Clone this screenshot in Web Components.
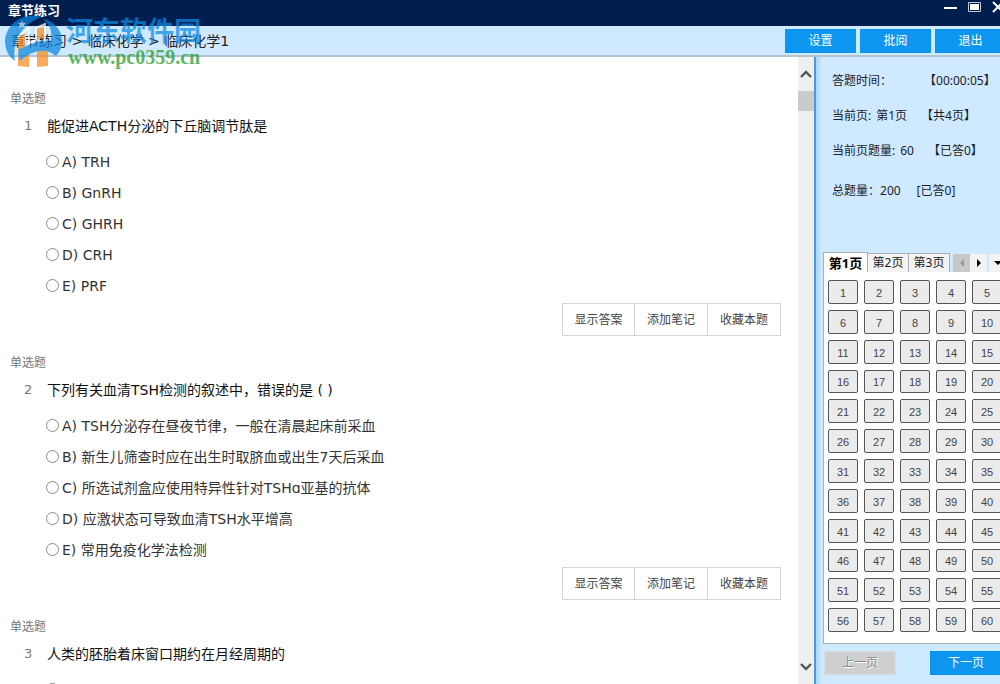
<!DOCTYPE html>
<html lang="zh-CN">
<head>
<meta charset="utf-8">
<title>章节练习</title>
<style>
html, body { margin: 0; height: 100%; overflow: hidden; }
body { font-family: "Noto Sans", "Noto Sans CJK SC", sans-serif; font-size: 12px; color: #222; background: #fff; }
</style>
</head>
<body>
<exam-app></exam-app>
<script>
function define(name, html, setup) {
  const template = document.createElement('template');
  template.innerHTML = html;
  customElements.define(name, class extends HTMLElement {
    connectedCallback() {
      if (this.shadowRoot) return;
      const root = this.attachShadow({ mode: 'open' });
      root.append(template.content.cloneNode(true));
      if (setup) setup(this, root);
    }
  });
}

define('title-bar', `
<style>
:host { display: flex; justify-content: space-between; height: 26px; background: #001f4f; color: #fff; }
h1 { margin: 0; padding: 1px 8px; font-size: 13px; line-height: 18px; font-weight: 700; }
nav { display: flex; gap: 10px; margin-right: -5px; }
button { padding: 0; border: 0; background: none; width: 14px; height: 15px; display: block; }
svg { display: block; }
</style>
<h1><slot></slot></h1>
<nav>
<button aria-label="最小化"><svg width="14" height="15"><path d="M1 8h13" stroke="#fff" stroke-width="2"/></svg></button>
<button aria-label="最大化"><svg width="14" height="15"><path d="M1.5 2.5h12v9h-12z" fill="none" stroke="#c9ccd6"/><path d="M3 4h9v6H3z" fill="#fff"/></svg></button>
<button aria-label="关闭"><svg width="14" height="15"><path d="M2 2l10 10M12 2L2 12" stroke="#fff" stroke-width="2"/></svg></button>
</nav>`);

define('blue-button', `
<style>
:host { display: block; }
button { width: 100%; height: 24px; padding: 0; border: 1px solid #0b93ea; background: #0c96ef; color: #fff; font: inherit; line-height: 20px; }
button:disabled { background: #cfcfcf; border-color: #dcdcdc; color: #8b8b8b; text-shadow: 1px 1px #fff; }
</style>
<button><slot></slot></button>`, (host, root) => {
  root.querySelector('button').disabled = host.hasAttribute('disabled');
});

define('tool-bar', `
<style>
:host { display: flex; justify-content: space-between; height: 29px; background: #cfe9fe; border-bottom: 2px solid #b2c3d3; }
.crumbs { padding-left: 11px; font: 14px/30px "DejaVu Sans", "Noto Sans CJK SC", sans-serif; color: #222; white-space: pre; }
.crumbs a { color: inherit; text-decoration: none; }
.actions { display: flex; gap: 4px; padding-top: 3px; margin-right: -6px; }
blue-button { width: 71px; }
</style>
<div class="crumbs"><a href="#chapter">章节练习</a> &gt; <a href="#subject">临床化学</a> &gt; <a href="#unit">临床化学1</a></div>
<div class="actions"><blue-button>设置</blue-button><blue-button>批阅</blue-button><blue-button>退出</blue-button></div>`);

define('site-mark', `
<style>
:host { display: flex; gap: 4px; opacity: .72; pointer-events: none; }
svg { display: block; }
.name { font: 700 27px/32px "Noto Sans CJK SC", sans-serif; color: #0d8ae4; }
.url { font: 700 20px/22px "Liberation Serif", serif; color: #1c9c28; padding-left: 2px; }
</style>
<svg width="57" height="56" viewBox="0 0 57 56">
<path d="M13 24v28l11 1V38l-4 1V19zM32 37v16l11-1V33zM32 14l9-1v9l-9 4z" fill="#fb8c1e"/>
<path d="M36 3C18-2 1 10 0 27c0 9 4 16 10 20-2-11 0-20 6-29C21 11 28 6 36 3z" fill="#0a86de"/>
<path d="M38 5c11 2 19 11 19 22 0 6-2 11-6 15-10-8-22-7-36 5-2-4-2-8-1-12 11-4 18-8 22-8 5-1 8 0 9 2 3-10 1-18-7-24z" fill="#0a86de"/>
<path d="M17 6l1 3h3l-2 2 1 3-3-2-3 2 1-3-2-2h3z" fill="#e8f5ff"/>
<path d="M13 23l11-9v15l7-3V14l9-4v18" fill="none" stroke="#fff" stroke-width="2"/>
</svg>
<div><div class="name">河东软件园</div><div class="url">www.pc0359.cn</div></div>`);

define('question-card', `
<style>
:host { display: block; margin-bottom: 17px; }
.kind { margin: 0 0 5px; padding-left: 10px; line-height: 20px; color: #777; }
h2 { display: flex; margin: 0 0 8px; font: 400 14px/24px "DejaVu Sans", "Noto Sans CJK SC", sans-serif; color: #111; }
h2 span { width: 23px; padding-left: 24px; font-size: 13px; color: #777; }
fieldset { border: 0; margin: 0; padding: 0 0 2px 46px; min-width: 0; }
label { display: flex; align-items: center; gap: 3px; height: 31px; font: 14px/20px "DejaVu Sans", "Noto Sans CJK SC", sans-serif; color: #333; }
input { appearance: none; box-sizing: border-box; width: 13px; height: 13px; margin: 0; border: 1px solid #8c8c8c; border-radius: 50%; background: #fff; }
.tools { display: flex; justify-content: flex-end; padding-right: 17px; }
.tools button { box-sizing: border-box; width: 74px; height: 33px; margin-left: -1px; padding: 0 0 2px; border: 1px solid #d4d4d4; background: #fff; font: inherit; color: #444; }
.tools button:first-child { width: 73px; }
</style>
<p class="kind">单选题</p>
<h2><span></span><slot></slot></h2>
<fieldset aria-label="选项"></fieldset>
<div class="tools"><button>显示答案</button><button>添加笔记</button><button>收藏本题</button></div>`, (host, root) => {
  const number = host.getAttribute('number');
  root.querySelector('span').textContent = number;
  const set = root.querySelector('fieldset');
  host.getAttribute('options').split('|').forEach((text, i) => {
    const label = document.createElement('label');
    const input = document.createElement('input');
    input.type = 'radio';
    input.name = 'q' + number;
    label.append(input, text ? 'ABCDE'[i] + ') ' + text : '');
    set.append(label);
  });
});

define('scroll-rail', `
<style>
:host { display: flex; flex-direction: column; width: 16px; background: #efefef; }
button { border: 0; padding: 0; background: none; height: 34px; display: grid; place-items: center; }
button:first-child { padding-top: 8px; }
.track { flex: 1; }
.thumb { height: 20px; background: #cbcbcb; }
svg { display: block; }
</style>
<button aria-label="向上滚动"><svg width="14" height="10"><path d="M2 8l5-5 5 5" fill="none" stroke="#555" stroke-width="2.4"/></svg></button>
<div class="track"><div class="thumb"></div></div>
<button aria-label="向下滚动"><svg width="14" height="10"><path d="M2 2l5 5 5-5" fill="none" stroke="#555" stroke-width="2.4"/></svg></button>`);

define('exam-status', `
<style>
:host { display: block; padding: 14px 0 0 16px; white-space: nowrap; color: #1c1c2c; }
dl { margin: 0; display: grid; row-gap: 15px; line-height: 20px; }
div { display: flex; gap: 5px; }
dt, dd { margin: 0; }
dd + dd { margin-left: 9px; }
.time { gap: 32px; }
.total { padding-top: 5px; gap: 0; }
.total dd + dd { margin-left: 16px; }
</style>
<dl>
<div class="time"><dt>答题时间：</dt><dd>【00:00:05】</dd></div>
<div><dt>当前页:</dt><dd>第1页</dd><dd>【共4页】</dd></div>
<div><dt>当前页题量:</dt><dd>60</dd><dd>【已答0】</dd></div>
<div class="total"><dt>总题量：</dt><dd>200</dd><dd>[已答0]</dd></div>
</dl>`);

define('page-tabs', `
<style>
:host { display: flex; align-items: flex-end; height: 20px; white-space: nowrap; }
button { box-sizing: border-box; height: 19px; width: 41px; flex: none; padding: 0; border: 1px solid #a9b0b7; border-left: 0; border-bottom: 0; background: #f3f3f3; font: inherit; line-height: 18px; color: #222; }
button.on { width: 45px; height: 20px; border-left: 1px solid #a9b0b7; background: #fff; font-size: 13px; font-weight: 700; color: #000; }
.step { display: grid; place-items: center; width: 17px; height: 18px; border: 0; }
.step.first { margin-left: 3px; }
.step:disabled { background: #c8c8c8; }
.step.list { margin-left: 2px; }
</style>
<button class="on">第1页</button><button>第2页</button><button>第3页</button>
<button class="step first" disabled aria-label="上一组"><svg width="8" height="8"><path d="M6 0v8L2 4z" fill="#999"/></svg></button>
<button class="step" aria-label="下一组"><svg width="8" height="8"><path d="M2 0v8l4-4z" fill="#000"/></svg></button>
<button class="step list" aria-label="全部页"><svg width="8" height="8"><path d="M0 2h8L4 6z" fill="#000"/></svg></button>`);

define('answer-grid', `
<style>
:host { display: grid; grid-template-columns: repeat(5, 30px); grid-auto-rows: 1fr; gap: 6px; box-sizing: border-box; padding: 8px 0 11px 4px; border: 1px solid #a9b0b7; border-top: 0; background: #fff; }
button { min-height: 0; padding: 2px 0 0; border: 1px solid #555; border-radius: 2px; background: #ebebeb; font: 11px/12px "Liberation Sans", sans-serif; color: #444; }
</style>`, (host, root) => {
  for (let i = 1; i <= 60; i++) {
    const cell = document.createElement('button');
    cell.textContent = i;
    root.append(cell);
  }
});

define('side-panel', `
<style>
:host { display: flex; flex-direction: column; background: linear-gradient(90deg, #a9d6f8, #cfe9fe 6px); border-left: 2px solid #4a9ad4; overflow: hidden; box-sizing: border-box; }
exam-status { height: 181px; flex: none; }
page-tabs { flex: none; margin-left: 7px; }
answer-grid { flex: 1; min-height: 0; margin: 0 -8px 0 7px; }
footer { display: flex; justify-content: space-between; padding: 7px 0 9px 8px; margin-right: -2px; }
blue-button { width: 72px; }
</style>
<exam-status></exam-status>
<page-tabs></page-tabs>
<answer-grid></answer-grid>
<footer><blue-button disabled>上一页</blue-button><blue-button>下一页</blue-button></footer>`);

define('exam-app', `
<style>
:host { display: flex; flex-direction: column; height: 100vh; position: relative; overflow: hidden; }
title-bar, tool-bar { flex: none; }
.body { flex: 1; min-height: 0; display: grid; grid-template-columns: minmax(0, 1fr) 16px 186px; grid-template-rows: minmax(0, 1fr); }
main { overflow: hidden; padding-top: 32px; }
site-mark { position: absolute; left: 5px; top: 14px; }
</style>
<title-bar>章节练习</title-bar>
<tool-bar></tool-bar>
<div class="body">
<main>
<question-card number="1" options="TRH|GnRH|GHRH|CRH|PRF">能促进ACTH分泌的下丘脑调节肽是</question-card>
<question-card number="2" options="TSH分泌存在昼夜节律，一般在清晨起床前采血|新生儿筛查时应在出生时取脐血或出生7天后采血|所选试剂盒应使用特异性针对TSHɑ亚基的抗体|应激状态可导致血清TSH水平增高|常用免疫化学法检测">下列有关血清TSH检测的叙述中，错误的是 ( )</question-card>
<question-card number="3" options="||||">人类的胚胎着床窗口期约在月经周期的</question-card>
</main>
<scroll-rail></scroll-rail>
<side-panel></side-panel>
</div>
<site-mark></site-mark>`);
</script>
</body>
</html>
